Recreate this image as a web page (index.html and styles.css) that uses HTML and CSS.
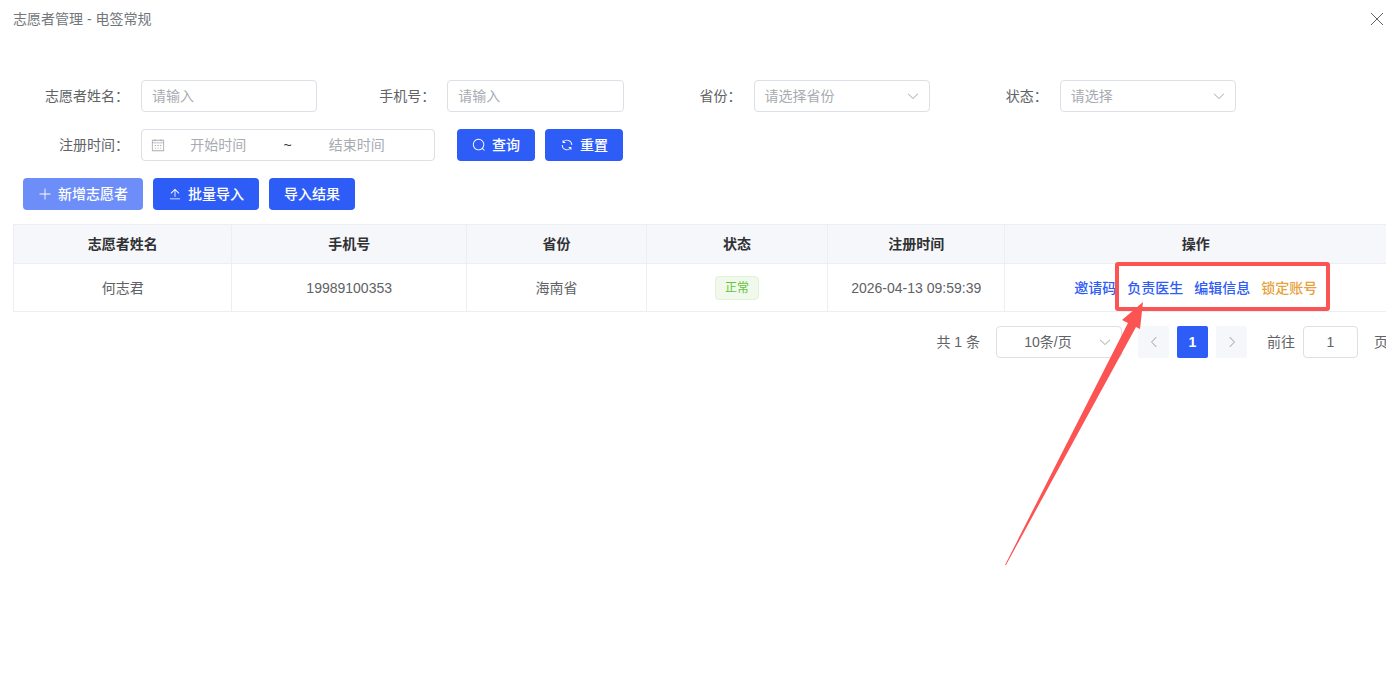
FILE: index.html
```
<!DOCTYPE html>
<html lang="zh-CN">
<head>
<meta charset="utf-8">
<title>志愿者管理 - 电签常规</title>
<link rel="stylesheet" href="styles.css">
</head>
<body>
<svg class="sprite" aria-hidden="true">
  <symbol id="arrow-down" viewBox="0 0 1024 1024"><path d="M831.872 340.864 512 652.672 192.128 340.864a30.592 30.592 0 0 0-42.752 0 29.12 29.12 0 0 0 0 41.6L489.664 714.24a32 32 0 0 0 44.672 0l340.288-331.712a29.12 29.12 0 0 0 0-41.728 30.592 30.592 0 0 0-42.752 0z"/></symbol>
  <symbol id="calendar" viewBox="0 0 1024 1024"><path d="M128 384v512h768V192H768v32a32 32 0 1 1-64 0v-32H320v32a32 32 0 0 1-64 0v-32H128v128h768v64H128zm192-256h384V96a32 32 0 1 1 64 0v32h160a32 32 0 0 1 32 32v768a32 32 0 0 1-32 32H96a32 32 0 0 1-32-32V160a32 32 0 0 1 32-32h160V96a32 32 0 0 1 64 0v32zm-32 384h64a32 32 0 0 1 0 64h-64a32 32 0 0 1 0-64zm0 192h64a32 32 0 1 1 0 64h-64a32 32 0 1 1 0-64zm192-192h64a32 32 0 0 1 0 64h-64a32 32 0 0 1 0-64zm0 192h64a32 32 0 1 1 0 64h-64a32 32 0 1 1 0-64zm192-192h64a32 32 0 1 1 0 64h-64a32 32 0 1 1 0-64zm0 192h64a32 32 0 1 1 0 64h-64a32 32 0 1 1 0-64z"/></symbol>
  <symbol id="search" viewBox="0 0 1024 1024"><path d="m795.904 750.72 124.992 124.928a32 32 0 0 1-45.248 45.248L750.656 795.904a416 416 0 1 1 45.248-45.248zM480 832a352 352 0 1 0 0-704 352 352 0 0 0 0 704z"/></symbol>
  <symbol id="refresh" viewBox="0 0 1024 1024"><path d="M771.776 794.88A384 384 0 0 1 128 512h64a320 320 0 0 0 555.712 216.448H654.72a32 32 0 1 1 0-64h149.056a32 32 0 0 1 32 32v148.928a32 32 0 1 1-64 0v-50.56zM276.288 295.616h92.992a32 32 0 0 1 0 64H220.16a32 32 0 0 1-32-32V178.56a32 32 0 0 1 64 0v50.56A384 384 0 0 1 896.128 512h-64a320 320 0 0 0-555.776-216.384z"/></symbol>
  <symbol id="plus" viewBox="0 0 1024 1024"><path d="M480 480V128a32 32 0 0 1 64 0v352h352a32 32 0 1 1 0 64H544v352a32 32 0 1 1-64 0V544H128a32 32 0 0 1 0-64h352z"/></symbol>
  <symbol id="upload" viewBox="0 0 1024 1024"><path d="M160 832h704a32 32 0 1 1 0 64H160a32 32 0 1 1 0-64zm384-578.304V704h-64V247.296L237.248 490.048 192 444.8 508.8 128l316.8 316.8-45.312 45.248L544 253.696z"/></symbol>
</svg>

<header class="page-header">
  <h1 class="page-title">志愿者管理 - 电签常规</h1>
  <button class="close" type="button" aria-label="关闭">
    <svg viewBox="0 0 14 14"><path d="M1 1l12 12M13 1L1 13"/></svg>
  </button>
</header>

<main>
  <form class="filters">
    <div class="field">
      <label for="name">志愿者姓名：</label>
      <input class="control" id="name" type="text" placeholder="请输入">
    </div>
    <div class="field">
      <label for="phone">手机号：</label>
      <input class="control" id="phone" type="text" placeholder="请输入">
    </div>
    <div class="field">
      <label for="province">省份：</label>
      <div class="select">
        <select class="control" id="province"><option>请选择省份</option></select>
        <svg class="icon caret"><use href="#arrow-down"/></svg>
      </div>
    </div>
    <div class="field">
      <label for="status">状态：</label>
      <div class="select">
        <select class="control" id="status"><option>请选择</option></select>
        <svg class="icon caret"><use href="#arrow-down"/></svg>
      </div>
    </div>
    <div class="field field-wide">
      <label for="start">注册时间：</label>
      <div class="control range">
        <svg class="icon"><use href="#calendar"/></svg>
        <input id="start" type="text" placeholder="开始时间">
        <span class="tilde">~</span>
        <input type="text" placeholder="结束时间" aria-label="结束时间">
      </div>
      <div class="buttons">
        <button class="btn" type="button"><svg class="icon"><use href="#search"/></svg>查询</button>
        <button class="btn" type="button"><svg class="icon"><use href="#refresh"/></svg>重置</button>
      </div>
    </div>
  </form>

  <div class="buttons toolbar">
    <button class="btn btn-hover" type="button"><svg class="icon"><use href="#plus"/></svg>新增志愿者</button>
    <button class="btn" type="button"><svg class="icon"><use href="#upload"/></svg>批量导入</button>
    <button class="btn" type="button">导入结果</button>
  </div>

  <table class="grid">
    <colgroup><col class="c-name"><col class="c-phone"><col class="c-province"><col class="c-status"><col class="c-time"><col></colgroup>
    <thead>
      <tr><th>志愿者姓名</th><th>手机号</th><th>省份</th><th>状态</th><th>注册时间</th><th>操作</th></tr>
    </thead>
    <tbody>
      <tr>
        <td>何志君</td>
        <td>19989100353</td>
        <td>海南省</td>
        <td><span class="tag">正常</span></td>
        <td>2026-04-13 09:59:39</td>
        <td>
          <div class="actions">
            <a href="#">邀请码</a>
            <a href="#">负责医生</a>
            <a href="#">编辑信息</a>
            <a class="warn" href="#">锁定账号</a>
          </div>
        </td>
      </tr>
    </tbody>
  </table>

  <nav class="pagination" aria-label="分页">
    <span>共 1 条</span>
    <div class="select page-size">
      <select class="control" aria-label="每页条数"><option>10条/页</option></select>
      <svg class="icon caret"><use href="#arrow-down"/></svg>
    </div>
    <div class="pager">
      <button class="page" type="button" aria-label="上一页" disabled><svg class="icon turn-left"><use href="#arrow-down"/></svg></button>
      <button class="page current" type="button">1</button>
      <button class="page" type="button" aria-label="下一页" disabled><svg class="icon turn-right"><use href="#arrow-down"/></svg></button>
    </div>
    <div class="jump">
      <label for="jump">前往</label>
      <input class="control" id="jump" type="text" value="1">
    </div>
    <span>页</span>
  </nav>
</main>

<svg class="annotation" viewBox="0 0 330 310" aria-hidden="true">
  <rect x="117" y="6" width="211" height="45" rx="1"/>
  <path d="M143 44L122 62L128 65L5 307L6 307L136 69L140 71Z"/>
</svg>
</body>
</html>
```
FILE: styles.css
```
* {
  box-sizing: border-box;
}

body {
  position: relative;
  margin: 0;
  min-height: 100vh;
  overflow: hidden;
  background: #fff;
  color: #606266;
  font: 14px/20px "Liberation Sans", "Noto Sans CJK SC", sans-serif;
}

button,
input,
select {
  font: inherit;
  color: inherit;
}

.sprite {
  position: absolute;
  width: 0;
  height: 0;
}

.icon {
  flex: none;
  width: 14px;
  height: 14px;
  fill: currentColor;
}

.page-header {
  display: flex;
  align-items: center;
  justify-content: space-between;
  height: 38px;
  padding: 0 2px 0 13px;
}

.page-title {
  margin: 0;
  font-size: 14px;
  font-weight: 400;
  color: #72767b;
}

.close {
  display: flex;
  padding: 0;
  border: 0;
  background: none;
  color: #606266;
}

.close svg {
  width: 14px;
  height: 14px;
  fill: none;
  stroke: currentColor;
}

.filters {
  display: grid;
  grid-template-columns: repeat(4, 1fr);
  row-gap: 17px;
  padding: 42px 150px 0 11px;
}

.field {
  display: flex;
  align-items: center;
}

.field > label {
  flex: none;
  width: 130px;
  padding-right: 12px;
  text-align: right;
}

.field-wide {
  grid-column: 1 / -1;
}

.control {
  flex: 1;
  width: 100%;
  min-width: 0;
  height: 32px;
  padding: 0 10px;
  border: 1px solid #dcdfe6;
  border-radius: 4px;
  background: #fff;
  outline: 0;
}

input::placeholder {
  color: #a8abb2;
  opacity: 1;
}

.select {
  position: relative;
  display: flex;
  flex: 1;
}

.select select {
  padding: 0 30px 0 10px;
  appearance: none;
  color: #a8abb2;
}

.caret {
  position: absolute;
  top: 9px;
  right: 10px;
  color: #a8abb2;
  pointer-events: none;
}

.range {
  display: flex;
  align-items: center;
  flex: none;
  width: 294px;
  padding: 0 24px 0 9px;
  color: #a8abb2;
}

.range input {
  flex: 1;
  min-width: 0;
  padding: 0;
  border: 0;
  background: none;
  text-align: center;
  outline: 0;
}

.tilde {
  width: 32px;
  text-align: center;
  color: #303133;
}

.buttons {
  display: flex;
  gap: 10px;
}

.field .buttons {
  margin-left: 22px;
}

.toolbar {
  padding: 17px 23px 14px;
}

.btn {
  display: flex;
  align-items: center;
  gap: 6px;
  height: 32px;
  padding: 0 15px;
  border: 0;
  border-radius: 4px;
  background: #2e5cf6;
  color: #fff;
  font-weight: 500;
}

.btn-hover {
  background: #6d8df9;
}

.grid {
  width: calc(100% - 13px);
  margin-left: 13px;
  border-top: 1px solid #ebeef5;
  border-spacing: 0;
  table-layout: fixed;
  text-align: center;
}

.c-name { width: 15.9%; }
.c-phone { width: 17.1%; }
.c-province { width: 13.1%; }
.c-status { width: 13.2%; }
.c-time { width: 12.9%; }

.grid th,
.grid td {
  padding: 0;
  border-bottom: 1px solid #ebeef5;
  border-left: 1px solid #ebeef5;
}

.grid th {
  height: 39px;
  background: #f5f7fa;
  color: #303133;
  font-weight: 600;
}

.grid td {
  height: 48px;
}

.tag {
  display: inline-block;
  padding: 0 9px;
  border: 1px solid #e1f3d8;
  border-radius: 4px;
  background: #f0f9eb;
  color: #67c23a;
  font-size: 12px;
  line-height: 22px;
}

.actions {
  display: flex;
  justify-content: center;
  gap: 11px;
}

.actions a {
  color: #2e5cf6;
  font-weight: 500;
  text-decoration: none;
}

.actions .warn {
  color: #e6a23c;
}

.pagination {
  display: flex;
  align-items: center;
  justify-content: flex-end;
  gap: 16px;
  margin: 14px -2px 0 0;
}

.page-size {
  flex: none;
  width: 126px;
}

.page-size select {
  padding: 0 32px 0 10px;
  color: #606266;
  text-align: center;
  text-align-last: center;
}

.pager {
  display: flex;
  gap: 8px;
  margin-right: 4px;
}

.page {
  display: flex;
  align-items: center;
  justify-content: center;
  width: 31px;
  height: 32px;
  padding: 0;
  border: 0;
  border-radius: 2px;
  background: #f5f7fa;
  color: #a8abb2;
}

.page.current {
  background: #2e5cf6;
  color: #fff;
  font-weight: 700;
}

.turn-left {
  transform: rotate(90deg);
}

.turn-right {
  transform: rotate(-90deg);
}

.jump {
  display: flex;
  align-items: center;
  gap: 8px;
}

.jump .control {
  flex: none;
  width: 55px;
  text-align: center;
}

.annotation {
  position: absolute;
  top: 258px;
  right: 56px;
  width: 330px;
  height: 310px;
  pointer-events: none;
}

.annotation rect {
  fill: none;
  stroke: #fc5353;
  stroke-width: 4;
}

.annotation path {
  fill: #fc5353;
}
```
